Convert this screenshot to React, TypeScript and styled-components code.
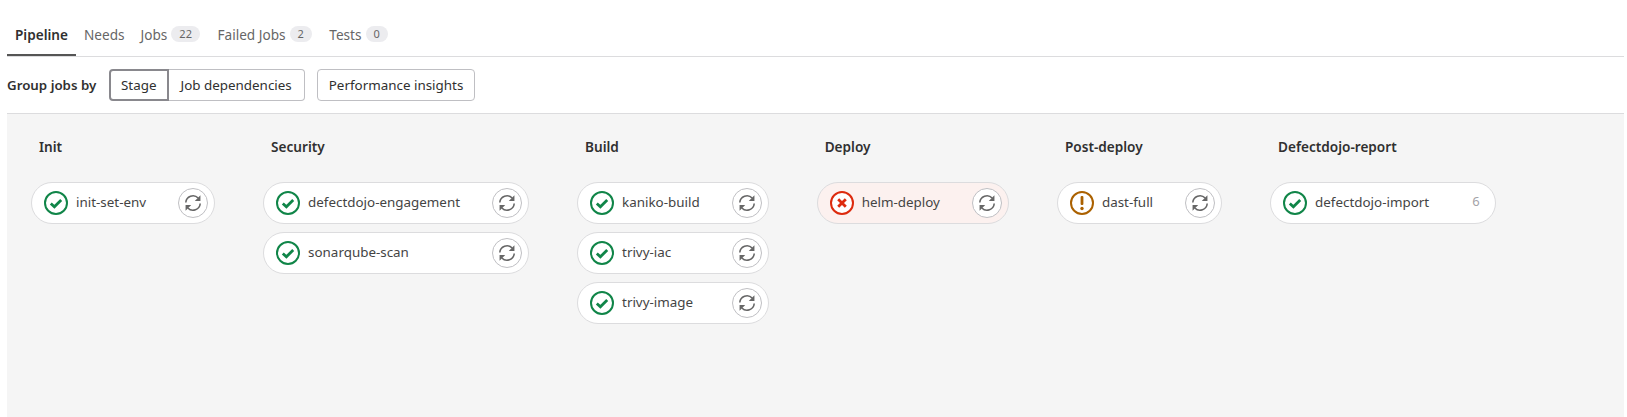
import React from 'react';
import styled, { createGlobalStyle } from 'styled-components';

type Status = 'success' | 'failed' | 'warning';

interface Job {
  name: string;
  status: Status;
  count?: number;
}

const stages: { title: string; jobs: Job[] }[] = [
  { title: 'Init', jobs: [{ name: 'init-set-env', status: 'success' }] },
  {
    title: 'Security',
    jobs: [
      { name: 'defectdojo-engagement', status: 'success' },
      { name: 'sonarqube-scan', status: 'success' },
    ],
  },
  {
    title: 'Build',
    jobs: [
      { name: 'kaniko-build', status: 'success' },
      { name: 'trivy-iac', status: 'success' },
      { name: 'trivy-image', status: 'success' },
    ],
  },
  { title: 'Deploy', jobs: [{ name: 'helm-deploy', status: 'failed' }] },
  { title: 'Post-deploy', jobs: [{ name: 'dast-full', status: 'warning' }] },
  { title: 'Defectdojo-report', jobs: [{ name: 'defectdojo-import', status: 'success', count: 6 }] },
];

const statusColors: Record<Status, string> = {
  success: '#108548',
  failed: '#dd2b0e',
  warning: '#ab6100',
};

const StatusIcon: React.FC<{ status: Status }> = ({ status }) => (
  <StatusSvg viewBox="0 0 24 24" $status={status}>
    <circle cx="12" cy="12" r="11" fill="#fff" stroke="currentColor" strokeWidth="2" />
    {status === 'success' && (
      <path d="M6.8 12.4l3.6 3.4 6.8-6.8" fill="none" stroke="currentColor" strokeWidth="2.8" />
    )}
    {status === 'failed' && (
      <path d="M8.2 8.2l7.6 7.6M15.8 8.2l-7.6 7.6" fill="none" stroke="currentColor" strokeWidth="2.8" />
    )}
    {status === 'warning' && (
      <>
        <rect x="10.6" y="5" width="2.8" height="9" rx="1" fill="currentColor" />
        <circle cx="12" cy="17.5" r="1.7" fill="currentColor" />
      </>
    )}
  </StatusSvg>
);

const RetryIcon: React.FC = () => (
  <svg viewBox="0 0 16 16" width="18" height="18">
    <path d="M1.6 7.6A6.4 6.4 0 0 1 12.6 3.6" fill="none" stroke="#666" strokeWidth="1.4" />
    <path d="M14.6 1.2V6.2H9.6z" fill="#666" />
    <path d="M14.4 8.4A6.4 6.4 0 0 1 3.4 12.4" fill="none" stroke="#666" strokeWidth="1.4" />
    <path d="M1.4 14.8V9.8H6.4z" fill="#666" />
  </svg>
);

const App: React.FC = () => {
  return (
    <>
      <GlobalStyle />
      <Page>
        <Tabs>
          <Tab $active>Pipeline</Tab>
          <Tab>Needs</Tab>
          <Tab>
            Jobs<Badge>22</Badge>
          </Tab>
          <Tab>
            Failed Jobs<Badge>2</Badge>
          </Tab>
          <Tab>
            Tests<Badge>0</Badge>
          </Tab>
        </Tabs>
        <Toolbar>
          <GroupLabel>Group jobs by</GroupLabel>
          <ButtonGroup>
            <GroupButton $selected>Stage</GroupButton>
            <GroupButton>Job dependencies</GroupButton>
          </ButtonGroup>
          <PlainButton>Performance insights</PlainButton>
        </Toolbar>
        <Graph>
          {stages.map((stage) => (
            <Stage key={stage.title}>
              <StageTitle>{stage.title}</StageTitle>
              <JobList>
                {stage.jobs.map((job) => (
                  <JobPill key={job.name} $failed={job.status === 'failed'}>
                    <StatusIcon status={job.status} />
                    <JobName>{job.name}</JobName>
                    {job.count ? (
                      <JobCount>{job.count}</JobCount>
                    ) : (
                      <RetryButton>
                        <RetryIcon />
                      </RetryButton>
                    )}
                  </JobPill>
                ))}
              </JobList>
            </Stage>
          ))}
        </Graph>
      </Page>
    </>
  );
};

// Styled Components
const GlobalStyle = createGlobalStyle`
  html, body {
    margin: 0;
    padding: 0;
    background: #fff;
    overflow: hidden;
  }
  * {
    box-sizing: border-box;
  }
`;

const Page = styled.div`
  font-family: 'Noto Sans', 'Open Sans', sans-serif;
  color: #303030;
  height: 417px;
  padding: 0 3px 0 7px;
  display: flex;
  flex-direction: column;
`;

const Tabs = styled.div`
  display: flex;
  height: 57px;
  padding-top: 16px;
  border-bottom: 1px solid #dcdcde;
`;

const Tab = styled.div<{ $active?: boolean }>`
  display: flex;
  align-items: center;
  height: 40px;
  padding: 0 8px 2px;
  font-size: 13.6px;
  font-weight: ${(p) => (p.$active ? 600 : 400)};
  color: ${(p) => (p.$active ? '#303030' : '#666')};
  border-bottom: 2px solid ${(p) => (p.$active ? '#555' : 'transparent')};
`;

const Badge = styled.span`
  margin: 0 1.5px 0 4px;
  height: 16px;
  padding: 0 8px;
  border-radius: 8px;
  background: #ececef;
  color: #666;
  font-size: 11px;
  line-height: 16px;
`;

const Toolbar = styled.div`
  display: flex;
  align-items: center;
  height: 57px;
  border-bottom: 1px solid #dcdcde;
`;

const GroupLabel = styled.span`
  width: 102px;
  font-size: 13.3px;
  font-weight: 600;
  color: #303030;
`;

const ButtonGroup = styled.div`
  display: flex;
  margin-right: 12px;
`;

const GroupButton = styled.div<{ $selected?: boolean }>`
  display: flex;
  align-items: center;
  height: 32px;
  padding: 0 ${(p) => (p.$selected ? 10 : 12)}px;
  font-size: 13.4px;
  color: #303030;
  background: #fff;
  border: 1px solid #bfbfc3;
  ${(p) =>
    p.$selected
      ? `
    border: 2px solid #89888d;
    border-radius: 4px 0 0 4px;
  `
      : `
    border-left: none;
    border-radius: 0 4px 4px 0;
  `}
`;

const PlainButton = styled.div`
  display: flex;
  align-items: center;
  height: 32px;
  padding: 0 11px;
  font-size: 13.4px;
  color: #303030;
  background: #fff;
  border: 1px solid #bfbfc3;
  border-radius: 4px;
`;

const Graph = styled.div`
  flex: 1;
  display: flex;
  gap: 48px;
  align-items: flex-start;
  padding-left: 24px;
  background: #f5f5f5;
`;

const Stage = styled.div`
  display: flex;
  flex-direction: column;
`;

const StageTitle = styled.div`
  height: 68px;
  padding: 23px 0 0 8px;
  font-size: 13.6px;
  line-height: 20px;
  font-weight: 600;
  color: #303030;
`;

const JobList = styled.div`
  display: flex;
  flex-direction: column;
  gap: 8px;
`;

const JobPill = styled.div<{ $failed?: boolean }>`
  display: flex;
  align-items: center;
  height: 42px;
  padding: 0 6px 0 12px;
  border-radius: 21px;
  border: 1px solid #dcdcde;
  background: ${(p) => (p.$failed ? '#fcf1ef' : '#fff')};
`;

const StatusSvg = styled.svg<{ $status: Status }>`
  width: 24px;
  height: 24px;
  flex-shrink: 0;
  color: ${(p) => statusColors[p.$status]};
`;

const JobName = styled.span`
  margin: 0 32px 0 8px;
  padding-bottom: 2px;
  font-size: 13.4px;
  color: #444;
  white-space: nowrap;
`;

const RetryButton = styled.div`
  display: flex;
  align-items: center;
  justify-content: center;
  width: 30px;
  height: 30px;
  margin-left: auto;
  border-radius: 50%;
  background: #fff;
  border: 1px solid #bfbfc3;
  flex-shrink: 0;
`;

const JobCount = styled.span`
  width: 28px;
  height: 30px;
  margin-left: auto;
  padding-left: 11px;
  font-size: 13px;
  line-height: 27px;
  color: #a4a3a8;
`;

export default App;
